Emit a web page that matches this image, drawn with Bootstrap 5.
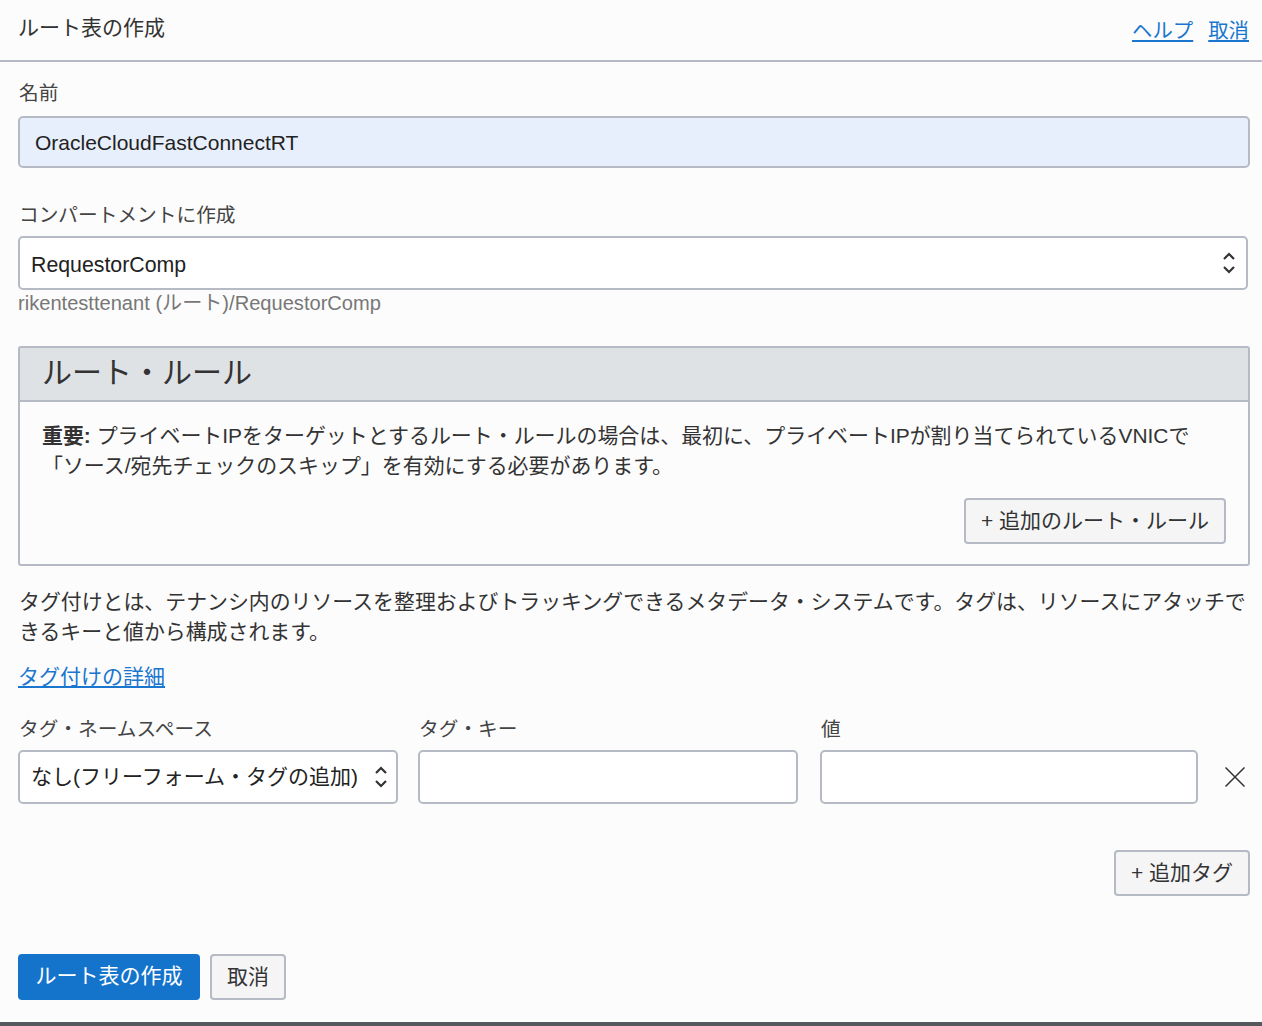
<!DOCTYPE html>
<html lang="ja">
<head>
<meta charset="utf-8">
<title>ルート表の作成</title>
<link href="https://cdn.jsdelivr.net/npm/bootstrap@5.3.2/dist/css/bootstrap.min.css" rel="stylesheet">
<script src="https://cdn.jsdelivr.net/npm/bootstrap@5.3.2/dist/js/bootstrap.bundle.min.js"></script>
<style>
  html, body { height: 1026px; overflow: hidden; }
  body {
    background: #fcfcfc;
    color: #333;
    font-family: "Liberation Sans", "Noto Sans CJK JP", sans-serif;
    font-size: 21px;
    line-height: 30px;
    border-bottom: 4px solid #55585c;
  }
  a { color: #1a76ce; }
  .panel-head { height: 62px; padding: 13px 13px 0 18px; border-bottom: 2px solid #b5bac4; }
  .panel-title { font-size: 21px; line-height: 30px; }
  .head-links { gap: 15px; padding-top: 3px; font-size: 20.4px; }
  .panel-body { padding: 16px 12px 0 18px; }
  .fld-label { display: block; font-size: 19.7px; line-height: 30px; color: #444; margin: 0 0 6px 1px; }
  .name-label { margin-bottom: 8px; }
  .comp-label { margin-top: 32px; }
  .fld-input {
    height: 52px; border: 2px solid #b5bac4; border-radius: 5px; background: #fff;
    font-size: 21px; color: #222; box-shadow: none; padding: 2px 15px 0;
  }
  .tag-input { height: 54px; }
  .fld-name { background: #e8effc; }
  .fld-select {
    height: 54px; padding: 0 30px 0 11px; appearance: none; background: #fff none;
    border: 2px solid #b5bac4; border-radius: 5px; font-size: 21px; color: #222;
  }
  .sel-wrap { position: relative; }
  .comp-wrap { margin-right: 2px; }
  .comp-wrap .fld-select { padding-top: 6px; font-size: 21.3px; }
  .sel-arrows { position: absolute; right: 10px; top: 50%; transform: translateY(-50%); width: 14px; height: 28px; pointer-events: none; }
  .comp-wrap .sel-arrows { right: 12px; }
  .hint { font-size: 20.1px; line-height: 26px; color: #777; }
  .rule-box { border: 2px solid #b5bac4; border-radius: 3px; margin-top: 30px; height: 220px; }
  .rule-head { background: #dfe2e5; height: 54px; font-size: 30px; line-height: 50px; padding-left: 22px; border-bottom: 2px solid #b5bac4; color: #333; }
  .rule-body { padding: 19px 22px 0; font-size: 20.95px; }
  .rule-note { margin: 0 0 17px; }
  .sec-btn {
    background: #f5f5f6; border: 2px solid #b5bac4; border-radius: 4px; color: #333;
    font-size: 21px; height: 46px; padding: 0 15px 2px; line-height: 1;
  }
  .tag-intro { margin: 21px 0 0 1px; font-size: 20.9px; }
  .tag-link { display: inline-block; margin: 15px 0 0; }
  .tag-row { margin-top: 22px; }
  .tag-col { flex: none; width: 380px; }
  .tag-col + .tag-col { margin-left: 20px; }
  .tag-col.val-col { width: 378px; margin-left: 22px; }
  .tag-close { flex: none; width: 52px; height: 54px; margin-top: 36px; padding-right: 5px; }
  .add-row { margin-top: 46px; }
  .foot { margin-top: 58px; gap: 10px; }
  .pri-btn { background: #1474cc; border: 0; border-radius: 4px; color: #fff; font-size: 21px; height: 46px; width: 182px; padding: 0 0 2px; }
</style>
</head>
<body>
  <header class="panel-head d-flex justify-content-between">
    <div class="panel-title">ルート表の作成</div>
    <div class="head-links d-flex"><a href="#">ヘルプ</a><a href="#">取消</a></div>
  </header>
  <main class="panel-body">
    <label class="fld-label name-label">名前</label>
    <input class="form-control fld-input fld-name" value="OracleCloudFastConnectRT">

    <label class="fld-label comp-label">コンパートメントに作成</label>
    <div class="sel-wrap comp-wrap">
      <select class="form-select fld-select w-100"><option>RequestorComp</option></select>
      <svg class="sel-arrows" viewBox="0 0 14 28"><path d="M2 10l5-5 5 5M2 18l5 5 5-5" fill="none" stroke="#333" stroke-width="2.2"/></svg>
    </div>
    <div class="hint">rikentesttenant (ルート)/RequestorComp</div>

    <section class="rule-box">
      <div class="rule-head">ルート・ルール</div>
      <div class="rule-body">
        <p class="rule-note"><b>重要:</b> プライベートIPをターゲットとするルート・ルールの場合は、最初に、プライベートIPが割り当てられているVNICで「ソース/宛先チェックのスキップ」を有効にする必要があります。</p>
        <div class="d-flex justify-content-end"><button class="btn sec-btn">+ 追加のルート・ルール</button></div>
      </div>
    </section>

    <p class="tag-intro mb-0">タグ付けとは、テナンシ内のリソースを整理およびトラッキングできるメタデータ・システムです。タグは、リソースにアタッチできるキーと値から構成されます。</p>
    <a href="#" class="tag-link">タグ付けの詳細</a>

    <div class="tag-row d-flex">
      <div class="tag-col">
        <label class="fld-label">タグ・ネームスペース</label>
        <div class="sel-wrap">
          <select class="form-select fld-select w-100"><option>なし(フリーフォーム・タグの追加)</option></select>
          <svg class="sel-arrows" viewBox="0 0 14 28"><path d="M2 10l5-5 5 5M2 18l5 5 5-5" fill="none" stroke="#333" stroke-width="2.2"/></svg>
        </div>
      </div>
      <div class="tag-col">
        <label class="fld-label">タグ・キー</label>
        <input class="form-control fld-input tag-input">
      </div>
      <div class="tag-col val-col">
        <label class="fld-label">値</label>
        <input class="form-control fld-input tag-input">
      </div>
      <div class="tag-close d-flex align-items-center justify-content-end">
        <svg width="20" height="20" viewBox="0 0 20 20"><path d="M0.5 0.5l19 19M19.5 0.5l-19 19" stroke="#333" stroke-width="1.5" fill="none"/></svg>
      </div>
    </div>

    <div class="add-row d-flex justify-content-end"><button class="btn sec-btn">+ 追加タグ</button></div>

    <div class="foot d-flex">
      <button class="btn pri-btn">ルート表の作成</button>
      <button class="btn sec-btn">取消</button>
    </div>
  </main>
</body>
</html>
